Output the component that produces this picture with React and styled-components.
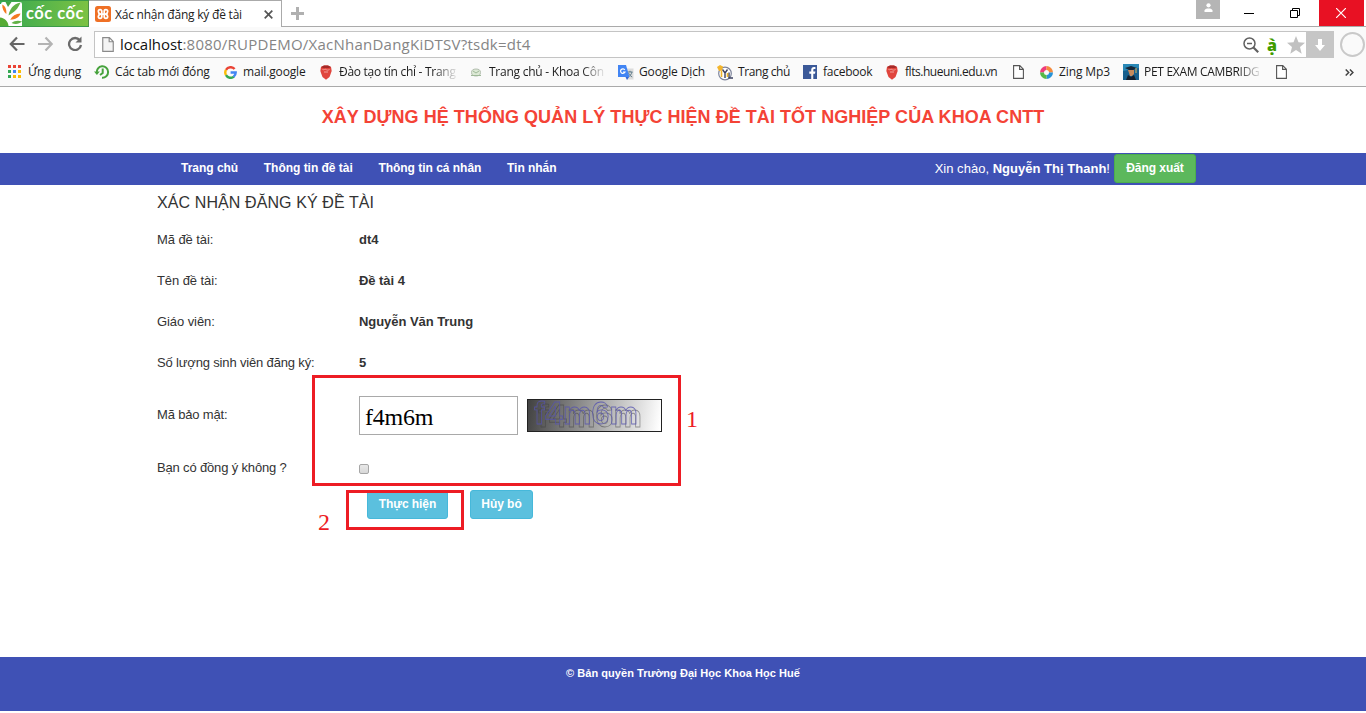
import React from 'react';
import styled, { createGlobalStyle } from 'styled-components';

const GlobalStyle = createGlobalStyle`
  *, *::before, *::after { box-sizing: border-box; }
  body { margin: 0; background: #fff; overflow: hidden; }
  svg { display: block; flex: none; }
`;

const uiFont = '"Open Sans", "Noto Sans", sans-serif';
const pageFont = '"Liberation Sans", Arial, sans-serif';

const Screen = styled.div`
  position: relative;
  width: 1366px;
  height: 713px;
  display: flex;
  flex-direction: column;
  overflow: hidden;
  background: #fff;
`;

/* ---------- browser chrome ---------- */

const TabStrip = styled.div`
  display: flex;
  height: 27px;
  font-family: ${uiFont};
`;

const Brand = styled.div`
  width: 89px;
  height: 27px;
  border: 1px solid #3b9b48;
  border-left: 0;
  border-right-color: #4f8f49;
  background: linear-gradient(90deg, #35a852, #7cc242);
  display: flex;
  align-items: center;
`;

const BrandName = styled.span`
  margin: 0 0 1px 2px;
  font: 700 16.5px/24px Lato, sans-serif;
  letter-spacing: 0.5px;
  color: #fff;
  white-space: nowrap;
`;

const Tab = styled.div`
  width: 193px;
  display: flex;
  align-items: center;
  padding: 0 8px 0 6px;
  border-top: 1px solid #aaa;
  border-right: 1px solid #aaa;
  font-size: 12px;
`;

const TabTitle = styled.span`
  margin-left: 4px;
  flex: 1;
  white-space: nowrap;
  letter-spacing: -0.22px;
  color: #222;
`;

const StripRest = styled.div`
  flex: 1;
  display: flex;
  border-bottom: 1px solid #aaa;
  padding: 1px 2px 0 9px;
`;

const WindowButtons = styled.div`
  margin: -1px 0 -1px auto;
  display: flex;
`;

const UserBadge = styled.div`
  width: 24px;
  height: 19px;
  margin-right: 7px;
  background: #b5b5b5;
  display: flex;
  justify-content: center;
  padding-top: 3px;
`;

const WindowButton = styled.div`
  width: ${(p) => (p.$danger ? 45 : 46)}px;
  height: 26px;
  display: flex;
  align-items: center;
  justify-content: center;
  padding-right: ${(p) => (p.$danger ? 1 : 2)}px;
  background: ${(p) => (p.$danger ? '#e81123' : 'transparent')};
`;

const Toolbar = styled.div`
  height: 31px;
  display: flex;
  align-items: center;
  background: #fafafa;
  padding-left: 9px;
  gap: 13px;
`;

const Address = styled.div`
  width: 1240px;
  height: 27px;
  margin: 4px 0 0 -2px;
  flex: none;
  border: 1px solid #c4c4c4;
  border-right: 0;
  background: #fff;
  display: flex;
  align-items: center;
  padding-left: 7px;
  font: 15px/20px ${uiFont};
`;

const Url = styled.span`
  margin: -1px 0 0 6px;
  flex: 1;
  color: #858585;
  letter-spacing: 0.24px;
  b { font-weight: 400; color: #111; letter-spacing: -0.05px; }
`;

const AddressTools = styled.div`
  display: flex;
  align-items: center;
  gap: 8px;
`;

const Glyph = styled.span`
  width: 12px;
  color: #3f9c00;
  font: 800 16px/22px ${uiFont};
`;

const Download = styled.div`
  width: 28px;
  height: 27px;
  margin-left: -7px;
  background: #c6c6c6;
  display: flex;
  align-items: center;
  justify-content: center;
`;

const Ring = styled.div`
  width: 25px;
  height: 25px;
  margin: 3px 0 0 -7px;
  border: 2px solid #c9c9c9;
  border-radius: 50%;
  flex: none;
`;

const BookmarkBar = styled.div`
  height: 29px;
  display: flex;
  align-items: center;
  padding-left: 8px;
  border-bottom: 1px solid #aaa;
  background: #fafafa;
  font: 12px/18px ${uiFont};
  color: #1c1c1c;
`;

const Bookmark = styled.div`
  width: ${(p) => p.$cell}px;
  flex: none;
  display: flex;
  align-items: center;
`;

const BookmarkIcon = styled.span`
  width: ${(p) => p.$room}px;
  flex: none;
`;

const BookmarkLabel = styled.span`
  letter-spacing: ${(p) => p.$track || 0}px;
  white-space: nowrap;
  mask-image: ${(p) => (p.$fade ? 'linear-gradient(90deg, #000 calc(100% - 22px), rgba(0, 0, 0, 0.1))' : 'none')};
`;

/* ---------- page ---------- */

const Title = styled.h1`
  margin: 0;
  height: 66px;
  font: 700 18px/60px ${pageFont};
  letter-spacing: 0.04px;
  text-align: center;
  color: #f44336;
`;

const NavBar = styled.nav`
  height: 32px;
  background: #3f51b5;
  display: flex;
  align-items: center;
  padding: 0 170px 0 181px;
  font: 13px/18px ${pageFont};
  color: #fff;
`;

const NavItem = styled.a`
  margin: -3px 25.6px 0 0;
  font-size: 12px;
  font-weight: 700;
  letter-spacing: -0.02px;
`;

const Greeting = styled.span`
  margin: -1px 4px 0 auto;
  letter-spacing: 0.02px;
`;

const Button = styled.button`
  width: ${(p) => p.$w}px;
  height: 29px;
  padding: 0 0 2px;
  border: 1px solid ${(p) => (p.$tone === 'green' ? '#4cae4c' : '#46b8da')};
  border-radius: 3px;
  background: ${(p) => (p.$tone === 'green' ? '#5cb85c' : '#5bc0de')};
  color: #fff;
  font: 700 12px/18px ${pageFont};
  letter-spacing: -0.05px;
`;

const LogoutButton = styled(Button)`
  margin-bottom: 2px;
  padding-bottom: 1px;
`;

const Content = styled.main`
  height: 472px;
  padding-left: 157px;
  font: 13px/18px ${pageFont};
  color: #333;
`;

const Heading = styled.h2`
  margin: 0;
  height: 34px;
  font-size: 16px;
  font-weight: 400;
  line-height: 35px;
  letter-spacing: 0.1px;
`;

const Row = styled.div`
  height: ${(p) => p.$h || 41}px;
  display: grid;
  grid-template-columns: 202px auto;
  align-items: center;
`;

const Label = styled.span`
  letter-spacing: ${(p) => (p.$tight ? -0.16 : -0.08)}px;
`;

const Value = styled.div`
  display: flex;
  align-items: center;
  gap: 9px;
  font-weight: 700;
  letter-spacing: -0.05px;
`;

const CodeRow = styled(Row)`
  padding-top: 2px;
`;

const CodeInput = styled.input`
  width: 159px;
  height: 39px;
  padding: 5px 5px 0;
  border: 1px solid #a9a9a9;
  outline: none;
  font: 24px "Liberation Serif", serif;
  letter-spacing: -0.2px;
  color: #000;
`;

const Check = styled.span`
  width: 10px;
  height: 10px;
  margin-top: 3px;
  border: 1px solid #a6a6a6;
  border-radius: 2px;
  background: linear-gradient(#e8e8e8, #d8d8d8);
`;

const Actions = styled.div`
  display: flex;
  gap: 22px;
  padding-left: 210px;
`;

const Footer = styled.footer`
  height: 54px;
  background: #3f51b5;
  color: #fff;
  text-align: center;
  font: 700 11px/33px ${pageFont};
  letter-spacing: 0.04px;
`;

/* red call-outs lying over the page */
const Frame = styled.div`
  position: absolute;
  left: ${(p) => p.$x}px;
  top: ${(p) => p.$y}px;
  width: ${(p) => p.$w}px;
  height: ${(p) => p.$h}px;
  border: 3px solid #ed1c24;
`;

const Mark = styled.span`
  position: absolute;
  left: ${(p) => p.$x}px;
  top: ${(p) => p.$y}px;
  font: 24px/28px "Liberation Serif", serif;
  color: #ed1c24;
`;

/* ---------- icons ---------- */

const CocCocLogo = () => (
  <svg width="24" height="25" viewBox="0 0 24 25">
    <path d="M1 3q0-2 2-2h17q2 0 2 2v22H0V3z" fill="#fff" />
    <path d="M0 16.500c5 .5 8 4 8.500 8.500H0z" fill="#56ab35" />
    <path d="M2.300 3.500c3 1.500 4.500 5 4 9.500C3.800 11 2 7.500 2.300 3.500z" fill="#f47a20" />
    <path d="M20.500 1.500C18 8 14 11.500 8.500 14.500 9.500 8.500 13 3 20.500 1.500z" fill="#61b146" />
    <path d="M20.500 12.500c-1.500 4-5 6-10.300 6.300 1.800-4 5.300-6 10.300-6.300z" fill="#f47a20" />
    <path d="M22 20.500c-3 2.800-7 3-10.500 1.500 3-2.500 7-3 10.500-1.500z" fill="#61b146" />
    <path d="M5.500 1h6L8 6z" fill="#45a245" />
  </svg>
);

const XamppIcon = () => (
  <svg width="16" height="16" viewBox="0 0 16 16">
    <rect width="16" height="16" rx="2.500" fill="#ef7025" />
    <path d="M6.800 8.100V5.300c0-1-.6-1.600-1.700-1.600s-1.800.7-1.800 1.700c0 1.200.9 2.200 2.100 2.700-1.200.4-2.100 1.300-2.100 2.500 0 1 .7 1.700 1.800 1.700s1.700-.6 1.700-1.600zh2.400v2.600c0 1 .6 1.600 1.700 1.600s1.800-.7 1.800-1.700c0-1.200-.9-2.100-2.100-2.500 1.200-.5 2.100-1.500 2.100-2.700 0-1-.7-1.700-1.800-1.700s-1.700.6-1.700 1.600v2.800" fill="none" stroke="#fff" strokeWidth="1.700" />
  </svg>
);

const Arrow = ({ flip, color }) => (
  <svg width="16" height="16" viewBox="0 0 16 16" fill="none" stroke={color} strokeWidth="2.200">
    <path d={flip ? 'M7.500 2.500L13.700 9 7.500 15.500M13.500 9H0' : 'M8 2.500L1.800 9 8 15.500M2 9h13.500'} />
  </svg>
);

const Reload = () => (
  <svg width="16" height="16" viewBox="0 0 16 16">
    <path d="M12.800 5.300A6 6 0 1 0 14 10" fill="none" stroke="#6b6b6b" strokeWidth="2.300" />
    <path d="M14.500 1.500v6H8.500z" fill="#6b6b6b" />
  </svg>
);

const PageIcon = ({ dark, w = 11, h = 14 }) => (
  <svg width={w} height={h} viewBox="0 0 11 14">
    <path d="M.6.600h6.200l3.600 3.600v9.200H.6zM6.600.600v3.800h3.800" fill={dark ? '#fff' : '#f4f4f4'} stroke={dark ? '#555' : '#8a8a8a'} strokeWidth="1.100" />
  </svg>
);

const AppsIcon = () => (
  <svg width="13" height="14" viewBox="0 0 13 14">
    {['#ea4335', '#ea4335', '#ea4335', '#34a853', '#4285f4', '#fbbc05', '#34a853', '#fbbc05', '#fbbc05'].map((c, i) => (
      <rect key={i} x={(i % 3) * 5} y={Math.floor(i / 3) * 5} width="3" height="3" fill={c} />
    ))}
  </svg>
);

const RecentIcon = () => (
  <svg width="16" height="14" viewBox="0 0 16 14" fill="none" stroke="#46a23c" strokeWidth="2">
    <path d="M2.800 8A5.700 5.700 0 1 1 8 12.700M8.700 3.500V8L6 10" />
    <path d="M0 6.500h5.800L2.900 10z" fill="#46a23c" stroke="none" />
  </svg>
);

const GoogleIcon = () => (
  <svg width="13" height="13" viewBox="0 0 13 13" fill="none" strokeWidth="2.400">
    <path d="M10.600 3.100A5.200 5.200 0 0 0 2 3.900" stroke="#ea4335" />
    <path d="M2 3.900a5.200 5.200 0 0 0 0 5.200" stroke="#fbbc05" />
    <path d="M2 9.100a5.200 5.200 0 0 0 7.900 1.500" stroke="#34a853" />
    <path d="M9.600 10.800c1.400-1.100 2.100-2.600 2.100-4.300H6.600" stroke="#4285f4" />
  </svg>
);

const ShieldIcon = () => (
  <svg width="12" height="15" viewBox="0 0 12 15">
    <path d="M1 2l3-1.500h4L11 2l.7 4-2.200 6L6 14.700 2.500 12 .3 6z" fill="#e0453d" />
    <path d="M2.500 4.500c1.500.8 2.500-.8 3.500 0s2 .8 3.500 0M4 7h4" stroke="#f3a099" fill="none" />
    <path d="M1 2l3-1.500h4L11 2 9 3H3z" fill="#a52a28" />
  </svg>
);

const FacultyIcon = () => (
  <svg width="12" height="9" viewBox="0 0 12 9">
    <ellipse cx="6" cy="4.500" rx="4.500" ry="3.500" fill="#dce9d5" stroke="#b4bfb0" />
    <path d="M1 7.500h10M3 3l3 2 3-2" stroke="#9fb999" fill="none" />
  </svg>
);

const TranslateIcon = () => (
  <svg width="17" height="17" viewBox="0 0 17 17">
    <path d="M6 4.500h9.500v11H9z" fill="#dcdcdc" />
    <path d="M9.500 8h5M12 6.800V8m2 0c-.7 2.500-2 4-4 5m.5-4c1 2 2 3 3.700 4" stroke="#607d8b" fill="none" />
    <path d="M0 1h8l3.500 12H0z" fill="#4285f4" />
    <path d="M7.500 13H11l-2 3z" fill="#3367d6" />
    <path d="M6.800 5.800A2.300 2.300 0 1 0 7 8H5" stroke="#fff" fill="none" strokeWidth="1.200" />
  </svg>
);

const CrestIcon = () => (
  <svg width="16" height="17" viewBox="0 0 16 17">
    <circle cx="8" cy="9.500" r="6.300" fill="#fff" stroke="#7d849b" strokeWidth="1.200" />
    <path d="M0 3l3-2 3 1.500-1 4-3 .5z" fill="#f3b52c" />
    <path d="M5.500 5.500L8 9l2.500-3.500M8 9v5M12 8.500V14h4" stroke="#3a4060" strokeWidth="1.400" fill="none" />
    <path d="M4.500 6.500V13M10.500 9v4" stroke="#efb52d" strokeWidth="1.600" />
  </svg>
);

const FacebookIcon = () => (
  <svg width="14" height="14" viewBox="0 0 14 14">
    <rect width="14" height="14" fill="#3b5998" />
    <path d="M8.200 14V8.700H6.300V6.600h1.900V5c0-1.900 1.100-2.900 2.800-2.900h1.400V4h-1.100c-.7 0-1 .4-1 1v1.600h2.100L12 8.700h-1.700V14z" fill="#fff" />
  </svg>
);

const ZingIcon = () => (
  <svg width="13" height="13" viewBox="0 0 13 13" fill="none" strokeWidth="4">
    <path d="M2 6.500A4.500 4.500 0 0 1 6.500 2" stroke="#ee3b7b" />
    <path d="M6.500 2A4.500 4.500 0 0 1 11 6.500" stroke="#f58a3c" />
    <path d="M11 6.500A4.500 4.500 0 0 1 6.500 11" stroke="#2793d8" />
    <path d="M6.500 11A4.500 4.500 0 0 1 2 6.500" stroke="#56b947" />
  </svg>
);

const ExamIcon = () => (
  <svg width="16" height="16" viewBox="0 0 16 16">
    <rect width="16" height="16" fill="#175f8d" />
    <path d="M0 0h16v4L0 7z" fill="#2988b6" />
    <path d="M2 4l6-2 6 2-6 3z" fill="#162738" />
    <path d="M5 6h6v4l-2 2H7z" fill="#c68a5c" />
    <path d="M3 16l2-5 3 2 3-2 2 5z" fill="#15202e" />
    <path d="M13 4v5" stroke="#dfba5c" />
  </svg>
);

const CaptchaText = styled.text`
  font: 700 32px "Liberation Sans", Arial, sans-serif;
  fill: none;
  stroke: #5553b0;
  stroke-opacity: 0.8;
  stroke-width: 0.8px;
  filter: drop-shadow(4px 3.5px 0.5px rgba(60, 60, 60, 0.6));
`;

const Captcha = () => (
  <svg width="135" height="33" viewBox="0 0 135 33">
    <defs>
      <linearGradient id="fade" x1="0" y1="0.480" x2="1" y2="0.520">
        <stop offset="0" stopColor="#444" />
        <stop offset="1" stopColor="#fff" />
      </linearGradient>
    </defs>
    <rect x=".5" y=".5" width="134" height="32" fill="url(#fade)" stroke="#222" />
    <CaptchaText x="7" y="25" textLength="104">f4m6m</CaptchaText>
  </svg>
);

const bookmarks = [
  { icon: <AppsIcon />, label: 'Ứng dụng', cell: 86, room: 20, track: -0.22 },
  { icon: <RecentIcon />, label: 'Các tab mới đóng', cell: 130, room: 21, track: -0.18 },
  { icon: <GoogleIcon />, label: 'mail.google', cell: 96, room: 19, track: -0.15 },
  { icon: <ShieldIcon />, label: 'Đào tạo tín chỉ - Trang', cell: 150, room: 19, track: -0.28, fade: true },
  { icon: <FacultyIcon />, label: 'Trang chủ - Khoa Côn', cell: 148, room: 19, track: -0.24, fade: true },
  { icon: <TranslateIcon />, label: 'Google Dịch', cell: 99, room: 21, track: -0.12 },
  { icon: <CrestIcon />, label: 'Trang chủ', cell: 86, room: 21, track: -0.4 },
  { icon: <FacebookIcon />, label: 'facebook', cell: 83, room: 20, track: -0.25 },
  { icon: <ShieldIcon />, label: 'flts.hueuni.edu.vn', cell: 127, room: 19, track: -0.46 },
  { icon: <PageIcon dark />, label: '', cell: 27, room: 11 },
  { icon: <ZingIcon />, label: 'Zing Mp3', cell: 83, room: 19, track: -0.12 },
  { icon: <ExamIcon />, label: 'PET EXAM CAMBRIDG', cell: 153, room: 21, track: -0.3, fade: true },
  { icon: <PageIcon dark />, label: '', cell: 69, room: 11 },
];

export default function App() {
  return (
    <Screen>
      <GlobalStyle />
      <TabStrip>
        <Brand>
          <CocCocLogo />
          <BrandName>cốc cốc</BrandName>
        </Brand>
        <Tab>
          <XamppIcon />
          <TabTitle>Xác nhận đăng ký đề tài</TabTitle>
          <svg width="9" height="9" viewBox="0 0 9 9" stroke="#555" strokeWidth="1.700">
            <path d="M.7.700l7.600 7.600M8.300.700L.7 8.300" />
          </svg>
        </Tab>
        <StripRest>
          <svg width="13" height="25" viewBox="0 0 13 25" stroke="#b0b0b0" strokeWidth="3">
            <path d="M0 12.500h13M6.500 6v13" />
          </svg>
          <WindowButtons>
            <UserBadge>
              <svg width="9" height="9" viewBox="0 0 9 9" fill="#fff">
                <circle cx="4.500" cy="2.300" r="2.100" />
                <path d="M.5 9V7.500C.5 6 2.500 5.400 4.500 5.400s4 .6 4 2.100V9z" />
              </svg>
            </UserBadge>
            <WindowButton>
              <svg width="10" height="2" viewBox="0 0 10 2"><path d="M0 1h10v1H0z" /></svg>
            </WindowButton>
            <WindowButton>
              <svg width="10" height="10" viewBox="0 0 10 10" fill="none" stroke="#000">
                <path d="M.5 2.500h7v7h-7zM2.500 2.500v-2h7v7h-2" />
              </svg>
            </WindowButton>
            <WindowButton $danger>
              <svg width="10" height="10" viewBox="0 0 10 10" stroke="#fff" strokeWidth="1.200">
                <path d="M0 0l10 10M10 0L0 10" />
              </svg>
            </WindowButton>
          </WindowButtons>
        </StripRest>
      </TabStrip>

      <Toolbar>
        <Arrow color="#666" />
        <Arrow flip color="#b3b3b3" />
        <Reload />
        <Address>
          <PageIcon w={12} h={15} />
          <Url><b>localhost</b>:8080/RUPDEMO/XacNhanDangKiDTSV?tsdk=dt4</Url>
          <AddressTools>
            <svg width="16" height="16" viewBox="0 0 16 16" fill="none" stroke="#606060" strokeWidth="1.500">
              <circle cx="6.500" cy="6.500" r="5.500" />
              <path d="M10.500 10.500l4.700 4.700" strokeWidth="2.200" />
              <path d="M4 6.500h5" />
            </svg>
            <Glyph>ạ̀</Glyph>
            <svg width="18" height="18" viewBox="0 0 18 18" fill="#c1c1c1">
              <path d="M9 0l2.500 6.300 6.500.4-5 4.300 1.700 6.700L9 14.100l-5.700 3.600L5 11 0 6.700l6.500-.4z" />
            </svg>
            <Download>
              <svg width="10" height="12" viewBox="0 0 10 12" fill="#fff"><path d="M3 0h4v6h3l-5 6-5-6h3z" /></svg>
            </Download>
          </AddressTools>
        </Address>
        <Ring />
      </Toolbar>

      <BookmarkBar>
        {bookmarks.map((b, i) => (
          <Bookmark key={i} $cell={b.cell}>
            <BookmarkIcon $room={b.room}>{b.icon}</BookmarkIcon>
            {b.label && <BookmarkLabel $fade={b.fade} $track={b.track}>{b.label}</BookmarkLabel>}
          </Bookmark>
        ))}
        <svg width="9" height="7" viewBox="0 0 9 7" fill="none" stroke="#444" strokeWidth="1.500">
          <path d="M.7.500l3 3-3 3M4.900.500l3 3-3 3" />
        </svg>
      </BookmarkBar>

      <Title>XÂY DỰNG HỆ THỐNG QUẢN LÝ THỰC HIỆN ĐỀ TÀI TỐT NGHIỆP CỦA KHOA CNTT</Title>

      <NavBar>
        <NavItem>Trang chủ</NavItem>
        <NavItem>Thông tin đề tài</NavItem>
        <NavItem>Thông tin cá nhân</NavItem>
        <NavItem>Tin nhắn</NavItem>
        <Greeting>Xin chào, <b>Nguyễn Thị Thanh</b>!</Greeting>
        <LogoutButton $tone="green" $w={82}>Đăng xuất</LogoutButton>
      </NavBar>

      <Content>
        <Heading>XÁC NHẬN ĐĂNG KÝ ĐỀ TÀI</Heading>
        <Row><Label>Mã đề tài:</Label><Value>dt4</Value></Row>
        <Row><Label>Tên đề tài:</Label><Value>Đề tài 4</Value></Row>
        <Row><Label>Giáo viên:</Label><Value>Nguyễn Văn Trung</Value></Row>
        <Row><Label $tight>Số lượng sinh viên đăng ký:</Label><Value>5</Value></Row>
        <CodeRow $h={62}>
          <Label $tight>Mã bảo mật:</Label>
          <Value>
            <CodeInput defaultValue="f4m6m" />
            <Captcha />
          </Value>
        </CodeRow>
        <Row $h={45}><Label $tight>Bạn có đồng ý không ?</Label><Value><Check /></Value></Row>
        <Actions>
          <Button $w={81}>Thực hiện</Button>
          <Button $w={63}>Hủy bỏ</Button>
        </Actions>
      </Content>

      <Footer>© Bản quyền Trường Đại Học Khoa Học Huế</Footer>

      <Frame $x={312} $y={375} $w={369} $h={111} />
      <Frame $x={346} $y={490} $w={118} $h={40} />
      <Mark $x={686} $y={405}>1</Mark>
      <Mark $x={318} $y={508}>2</Mark>
    </Screen>
  );
}
